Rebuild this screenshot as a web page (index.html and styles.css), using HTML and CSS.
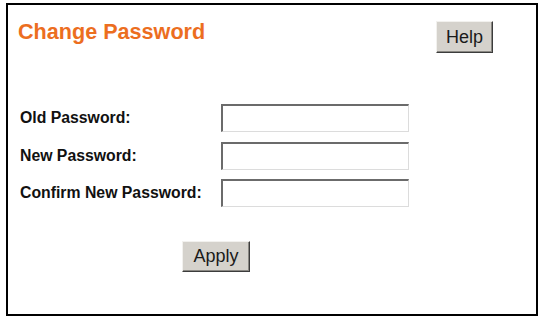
FILE: index.html
```html
<!DOCTYPE html>
<html>
<head>
<meta charset="utf-8">
<link rel="stylesheet" href="styles.css">
</head>
<body>
<div class="frame">
  <div class="header">
    <h1 class="title">Change Password</h1>
    <button class="btn btn-help" type="button">Help</button>
  </div>
  <form class="form">
    <label class="label" for="old">Old Password:</label>
    <input class="field" id="old" type="password">
    <label class="label" for="new">New Password:</label>
    <input class="field" id="new" type="password">
    <label class="label" for="confirm">Confirm New Password:</label>
    <input class="field" id="confirm" type="password">
  </form>
  <button class="btn btn-apply" type="button">Apply</button>
</div>
</body>
</html>
```
FILE: styles.css
```css
html, body {
  margin: 0;
  padding: 0;
  background: #fff;
}
body {
  font-family: "Liberation Sans", Arial, sans-serif;
}
.frame {
  box-sizing: border-box;
  margin: 3px 0 0 6px;
  width: 532px;
  height: 313px;
  border: 2px solid #000;
  padding: 15px 43px 0 10px;
}
.header {
  display: flex;
  justify-content: space-between;
  align-items: flex-start;
}
.title {
  margin: 0;
  font-size: 21.6px;
  line-height: 24px;
  font-weight: bold;
  color: #ec6e1f;
}
.btn {
  box-sizing: border-box;
  padding: 0;
  font-family: "Liberation Sans", Arial, sans-serif;
  font-size: 18px;
  color: #1a1a1a;
  background: #d5d2cc;
  border: 1px solid;
  border-color: #f2f1ee #3c3c3c #3c3c3c #f2f1ee;
  box-shadow: inset -1px -1px 0 #8a8883;
}
.btn-help {
  margin-top: 1px;
  width: 57px;
  height: 32px;
}
.form {
  display: grid;
  grid-template-columns: 201px 188px;
  grid-auto-rows: 28px;
  row-gap: 9.5px;
  margin: 51px 0 0 2px;
  align-items: center;
}
.label {
  font-size: 15.8px;
  font-weight: bold;
  color: #111;
}
.field {
  box-sizing: border-box;
  width: 188px;
  height: 28px;
  margin: 0;
  padding: 0;
  background: #fff;
  border-style: solid;
  border-width: 2px 1px 1px 2px;
  border-color: #6b6b6b #dcdcdc #dcdcdc #6b6b6b;
  outline: none;
}
.btn-apply {
  display: block;
  margin: 34px 0 0 164px;
  width: 68px;
  height: 31px;
}
```
